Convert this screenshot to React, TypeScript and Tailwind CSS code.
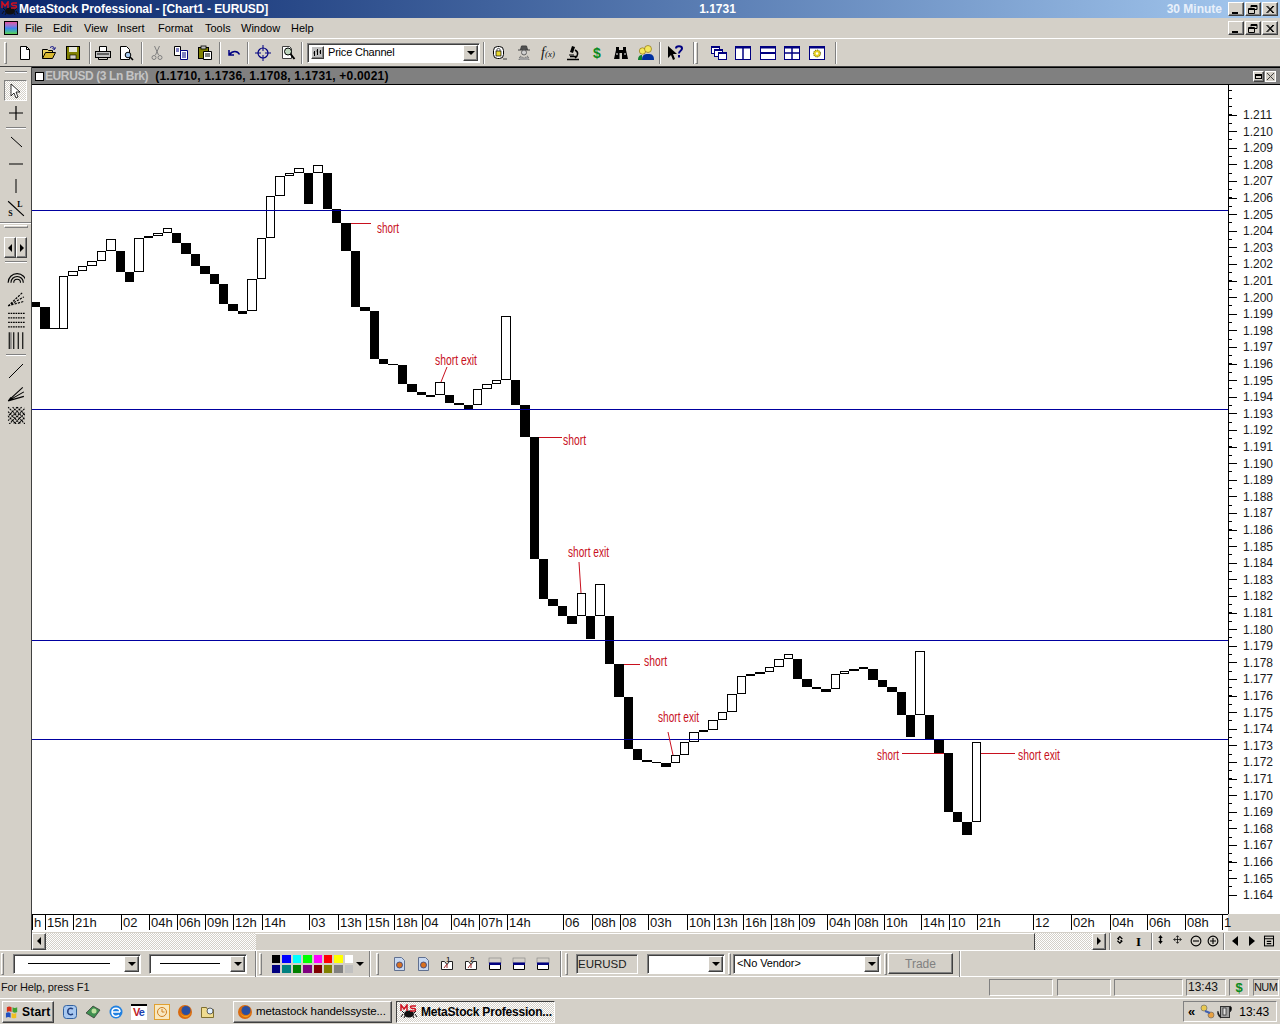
import React from "react";

const ui = "font-['Liberation_Sans',Arial,sans-serif]";
const raised = "border border-t-white border-l-white border-r-[#404040] border-b-[#404040] shadow-[inset_-1px_-1px_0_#808080]";
const sunken = "border border-t-[#808080] border-l-[#808080] border-r-white border-b-white shadow-[inset_1px_1px_0_#404040]";
const thin = "border border-t-[#808080] border-l-[#808080] border-r-white border-b-white";
const dither = "bg-[repeating-conic-gradient(#ffffff_0_25%,#d4d0c8_0_50%)] bg-[length:2px_2px]";

type Bar = [number, number, number, number, "b" | "w"];

const bars: Bar[] = [
  [32, 40, 302, 307, "b"], [40, 50, 307, 329, "b"], [50, 59, 328, 329, "b"], [59, 68, 276, 329, "w"],
  [68, 78, 271, 276, "w"], [78, 87, 266, 271, "w"], [87, 97, 261, 266, "w"], [97, 106, 251, 261, "w"],
  [106, 116, 239, 251, "w"], [116, 125, 251, 272, "b"], [125, 134, 272, 282, "b"], [134, 144, 238, 272, "w"],
  [144, 153, 236, 238, "b"], [153, 163, 233, 236, "w"], [163, 172, 228, 233, "w"], [172, 181, 233, 243, "b"],
  [181, 191, 243, 254, "b"], [191, 200, 254, 266, "b"], [200, 210, 266, 274, "b"], [210, 219, 274, 284, "b"],
  [219, 228, 284, 304, "b"], [228, 238, 304, 311, "b"], [238, 247, 311, 314, "b"], [247, 257, 279, 311, "w"],
  [257, 266, 238, 279, "w"], [266, 275, 196, 238, "w"], [275, 285, 176, 196, "w"], [285, 294, 173, 176, "w"],
  [294, 304, 168, 173, "w"], [304, 313, 173, 204, "b"], [313, 323, 165, 173, "w"], [323, 332, 173, 209, "b"],
  [332, 341, 209, 223, "b"], [341, 351, 223, 251, "b"], [351, 360, 251, 307, "b"], [360, 370, 307, 311, "b"],
  [370, 379, 311, 359, "b"], [379, 388, 359, 364, "b"], [388, 398, 364, 365, "b"], [398, 407, 365, 384, "b"],
  [407, 417, 384, 392, "b"], [417, 426, 392, 395, "b"], [426, 435, 395, 397, "b"], [435, 445, 382, 395, "w"],
  [445, 454, 395, 403, "b"], [454, 464, 403, 405, "b"], [464, 473, 405, 409, "b"], [473, 482, 389, 405, "w"],
  [482, 492, 384, 389, "w"], [492, 501, 380, 384, "w"], [501, 511, 316, 380, "w"], [511, 520, 380, 405, "b"],
  [520, 530, 405, 437, "b"], [530, 539, 437, 559, "b"], [539, 548, 559, 599, "b"], [548, 558, 599, 606, "b"],
  [558, 567, 606, 616, "b"], [567, 577, 616, 624, "b"], [577, 586, 593, 616, "w"], [586, 595, 616, 639, "b"],
  [595, 605, 584, 616, "w"], [605, 614, 616, 664, "b"], [614, 624, 664, 697, "b"], [624, 633, 697, 749, "b"],
  [633, 642, 749, 760, "b"], [642, 652, 760, 762, "b"], [652, 661, 762, 763, "b"], [661, 671, 763, 767, "b"],
  [671, 680, 755, 763, "w"], [680, 689, 742, 755, "w"], [689, 699, 732, 742, "w"], [699, 708, 730, 732, "b"],
  [708, 718, 720, 730, "w"], [718, 727, 712, 720, "w"], [727, 737, 694, 712, "w"], [737, 746, 676, 694, "w"],
  [746, 755, 674, 676, "b"], [755, 765, 672, 674, "b"], [765, 774, 667, 672, "w"], [774, 784, 659, 667, "w"],
  [784, 793, 654, 659, "w"], [793, 802, 659, 679, "b"], [802, 812, 679, 687, "b"], [812, 821, 687, 689, "b"],
  [821, 831, 689, 692, "b"], [831, 840, 674, 689, "w"], [840, 849, 671, 674, "w"], [849, 859, 669, 671, "b"],
  [859, 868, 667, 669, "b"], [868, 878, 669, 680, "b"], [878, 887, 680, 687, "b"], [887, 897, 687, 692, "b"],
  [897, 906, 692, 715, "b"], [906, 915, 715, 737, "b"], [915, 925, 651, 715, "w"], [925, 934, 715, 739, "b"],
  [934, 944, 739, 753, "b"], [944, 953, 753, 812, "b"], [953, 962, 812, 822, "b"], [962, 972, 822, 835, "b"],
  [972, 981, 742, 822, "w"],
];

const channels = [210, 409, 640, 739];

const notes = [
  { t: "short", x: 377, y: 233, w: 22 },
  { t: "short exit", x: 435, y: 365, w: 42 },
  { t: "short", x: 563, y: 445, w: 23 },
  { t: "short exit", x: 568, y: 557, w: 41 },
  { t: "short", x: 644, y: 666, w: 23 },
  { t: "short exit", x: 658, y: 722, w: 41 },
  { t: "short", x: 877, y: 760, w: 22 },
  { t: "short exit", x: 1018, y: 760, w: 42 },
];

const noteLines = [
  [351, 223.5, 371, 223.5], [447, 367, 441, 382], [539, 437.5, 562, 437.5], [579, 562, 581, 593],
  [624, 664.5, 640, 664.5], [668, 732, 673, 755], [902, 753.5, 944, 753.5], [981, 753.5, 1015, 753.5],
];

const prices = Array.from({ length: 48 }, (_, i) => ({ label: (1.211 - i * 0.001).toFixed(3), y: 114.5 + i * 16.6 }));
const minorTicks = Array.from({ length: 98 }, (_, i) => 89.5 + i * 8.3);

const times = [
  { t: "h", w: "w-[13px]" }, { t: "15h", w: "w-[28px]" }, { t: "21h", w: "w-[48px]" }, { t: "02", w: "w-[28px]" },
  { t: "04h", w: "w-[28px]" }, { t: "06h", w: "w-[28px]" }, { t: "09h", w: "w-[28px]" }, { t: "12h", w: "w-[29px]" },
  { t: "14h", w: "w-[47px]" }, { t: "03", w: "w-[29px]" }, { t: "13h", w: "w-[28px]" }, { t: "15h", w: "w-[28px]" },
  { t: "18h", w: "w-[28px]" }, { t: "04", w: "w-[29px]" }, { t: "04h", w: "w-[28px]" }, { t: "07h", w: "w-[28px]" },
  { t: "14h", w: "w-[56px]" }, { t: "06", w: "w-[29px]" }, { t: "08h", w: "w-[28px]" }, { t: "08", w: "w-[28px]" },
  { t: "03h", w: "w-[39px]" }, { t: "10h", w: "w-[27px]" }, { t: "13h", w: "w-[29px]" }, { t: "16h", w: "w-[28px]" },
  { t: "18h", w: "w-[28px]" }, { t: "09", w: "w-[28px]" }, { t: "04h", w: "w-[28px]" }, { t: "08h", w: "w-[29px]" },
  { t: "10h", w: "w-[37px]" }, { t: "14h", w: "w-[28px]" }, { t: "10", w: "w-[28px]" }, { t: "21h", w: "w-[56px]" },
  { t: "12", w: "w-[38px]" }, { t: "02h", w: "w-[39px]" }, { t: "04h", w: "w-[37px]" }, { t: "06h", w: "w-[38px]" },
  { t: "08h", w: "w-[37px]" }, { t: "1", w: "w-[6px]" },
];

const palette = [
  "bg-[#000000]", "bg-[#0000ff]", "bg-[#00ffff]", "bg-[#00ff00]", "bg-[#ff00ff]", "bg-[#ff0000]", "bg-[#ffff00]", "bg-[#ffffff]",
  "bg-[#000080]", "bg-[#008080]", "bg-[#008000]", "bg-[#800080]", "bg-[#800000]", "bg-[#808000]", "bg-[#808080]", "bg-[#c0c0c0]",
];

function I({ children, s = 16 }: { children: React.ReactNode; s?: number }) {
  return (
    <svg width={s} height={s} viewBox="0 0 16 16" className="shrink-0" fill="none">
      {children}
    </svg>
  );
}

function Sep({ className = "" }: { className?: string }) {
  return <div className={"w-[2px] h-[22px] border-l border-l-[#808080] border-r border-r-white " + className} />;
}

function Grip({ className = "" }: { className?: string }) {
  return <div className={"w-[3px] h-[22px] border border-t-white border-l-white border-r-[#808080] border-b-[#808080] " + className} />;
}

function Slot({ children, w = "w-[24px]" }: { children: React.ReactNode; w?: string }) {
  return <div className={"flex items-center justify-center shrink-0 " + w}>{children}</div>;
}

function Caret() {
  return <div className="w-0 h-0 border-l-[4px] border-r-[4px] border-t-[4px] border-l-transparent border-r-transparent border-t-black" />;
}

function Combo({ w, children }: { w: string; children?: React.ReactNode }) {
  return (
    <div className={"h-[20px] bg-white flex items-center justify-between shrink-0 pr-[1px] " + sunken + " " + w}>
      <div className="flex-1 flex items-center min-w-0 h-full">{children}</div>
      <div className={"w-[15px] h-[16px] bg-[#d4d0c8] flex items-center justify-center " + raised}>
        <Caret />
      </div>
    </div>
  );
}

function WinBtn({ kind }: { kind: "min" | "max" | "close" }) {
  return (
    <div className={"w-[16px] h-[14px] bg-[#d4d0c8] flex items-center justify-center " + raised}>
      <svg width="10" height="9" viewBox="0 0 10 9" fill="none">
        {kind === "min" && <rect x="1" y="7" width="6" height="2" fill="#000" />}
        {kind === "max" && (
          <path d="M3 2.500V.5h6v4H7M3 1.500h6M.5 3.500h6v5h-6zM.5 4.500h6" stroke="#000" />
        )}
        {kind === "close" && <path d="M1.500 1l6.500 7M2.500 1L9 8M8 1L1.500 8M9 1L2.500 8" stroke="#000" />}
      </svg>
    </div>
  );
}

function WinBtns() {
  return (
    <div className="flex gap-[1px] mr-[2px]">
      <WinBtn kind="min" />
      <WinBtn kind="max" />
      <WinBtn kind="close" />
    </div>
  );
}

function MsLogo() {
  return (
    <div className="relative w-[18px] h-[16px] shrink-0">
      <svg width="18" height="16" viewBox="0 0 18 16" fill="none">
        <path d="M3 10l-2 3M6 10L4 14M12 10l2 4M15 10l2 3M2 7l2 2M16 7l-2 2" stroke="#111" />
        <ellipse cx="9" cy="10" rx="5" ry="3.500" fill="#111" />
        <path d="M1 7V1l3 4 3-4v6M16 2h-4c-2 0-2 2 0 2.500h2c2 0 2 2.500 0 2.500h-4" stroke="#d01020" strokeWidth="1.500" />
      </svg>
    </div>
  );
}

/* toolbar glyphs */
const IconNew = () => <I><path d="M3.500 1.500h6l3 3v10h-9z" fill="#fff" stroke="#000" /><path d="M9.500 1.500v3h3" stroke="#000" /></I>;
const IconOpen = () => (
  <I>
    <path d="M1.500 13.500v-9h5l1 1h4v2" fill="#e8d060" stroke="#000" />
    <path d="M1.500 13.500l3-6h10l-3 6z" fill="#d8b830" stroke="#000" />
    <path d="M9 2.500c2-1.500 4-1 4.500 1M14.500 2.500l-1 2-2-1" stroke="#000080" />
  </I>
);
const IconSave = () => (
  <I>
    <rect x="1.500" y="1.500" width="13" height="13" fill="#808000" stroke="#000" />
    <rect x="4" y="2" width="8" height="5" fill="#e8e8e0" />
    <rect x="5" y="10" width="6" height="4" fill="#d4d0c8" stroke="#000" strokeWidth=".6" />
  </I>
);
const IconPrint = () => (
  <I>
    <path d="M4.500 6.500v-5h7v5" fill="#fff" stroke="#000" />
    <rect x=".5" y="6.500" width="15" height="6" fill="#c0c0c0" stroke="#000" />
    <path d="M3.500 12.500v2h9v-2M2 9h12" stroke="#000" />
  </I>
);
const IconPreview = () => (
  <I>
    <path d="M2.500 1.500h6l3 3v10h-9z" fill="#fff" stroke="#000" />
    <circle cx="10" cy="10" r="2.800" fill="#a6caf0" stroke="#000" />
    <path d="M12 12l3 3" stroke="#000" strokeWidth="1.600" />
  </I>
);
const IconCut = () => (
  <I>
    <path d="M5.500 1l4 9M10.500 1l-4 9" stroke="#808080" />
    <circle cx="5" cy="12.500" r="2" stroke="#808080" />
    <circle cx="11" cy="12.500" r="2" stroke="#808080" />
  </I>
);
const IconCopy = () => (
  <I>
    <path d="M1.500 1.500h6v9h-6z" fill="#fff" stroke="#000" />
    <path d="M7.500 5.500h7v9h-7z" fill="#fff" stroke="#000080" />
    <path d="M3 4h3M3 6h3M9 8h4M9 10h4M9 12h4" stroke="#000080" />
  </I>
);
const IconPaste = () => (
  <I>
    <rect x="1.500" y="2.500" width="10" height="11" fill="#808000" stroke="#000" />
    <rect x="4" y="1" width="5" height="3" fill="#c0c0c0" stroke="#000" strokeWidth=".8" />
    <path d="M6.500 6.500h8v8h-8z" fill="#fff" stroke="#000" />
    <path d="M8 9h5M8 11h5" stroke="#000" />
  </I>
);
const IconUndo = () => <I><path d="M3 5l0 5 5 0M3.500 9.500c3-4 8-4 10 0" stroke="#000080" strokeWidth="1.500" /></I>;
const IconTarget = () => (
  <I>
    <circle cx="8" cy="8" r="5" stroke="#000080" strokeWidth="1.200" />
    <path d="M8 0v6M8 10v6M0 8h6M10 8h6" stroke="#000080" />
  </I>
);
const IconZoomPage = () => (
  <I>
    <path d="M2.500 1.500h7l2 2v10h-9z" fill="#fff" stroke="#404040" />
    <circle cx="8" cy="6.500" r="3.500" fill="#c0d8c0" stroke="#000" />
    <path d="M10.500 9l4 5" stroke="#000" strokeWidth="2" />
  </I>
);
const IconPC = () => (
  <div className={"w-[13px] h-[13px] bg-[#c0c0c0] ml-[3px] flex items-center justify-center " + raised}>
    <svg width="9" height="9" viewBox="0 0 9 9"><path d="M1.500 3v5M4.500 1v6M7.500 2v4M.5 5h1M3.500 3h1M6.500 4h1" stroke="#000" /></svg>
  </div>
);
const IconLock = () => (
  <I>
    <rect x="2.500" y="1.500" width="10" height="12" rx="4" fill="#fff" stroke="#000" />
    <rect x="5" y="6" width="5" height="5" fill="#e8d830" stroke="#000" strokeWidth=".7" />
    <path d="M6 6V4.500c0-1.500 3-1.500 3 0V6M12 14h4" stroke="#404040" />
  </I>
);
const IconSpy = () => (
  <I>
    <path d="M2 5h12M4.500 5l1-4h5l1 4" fill="#505050" stroke="#404040" />
    <circle cx="8" cy="7.500" r="2.500" fill="#d0d0d0" stroke="#606060" />
    <path d="M3 15l1-4 4 2 4-2 1 4" fill="#a0a0a0" stroke="#707070" strokeDasharray="1 1" />
  </I>
);
const IconScope = () => (
  <I>
    <path d="M7 1l3 1-2 6-3-1z" fill="#000" />
    <path d="M10 5c4 2 3 6 0 8M2 14.500h12M5 11.500h6" stroke="#000" strokeWidth="1.500" />
    <path d="M4 10h5" stroke="#000" />
  </I>
);
const IconBino = () => (
  <I>
    <path d="M3 2h3v3h4V2h3v3l2 9h-6V8H6.500v6H1l2-9z" fill="#000" />
    <path d="M3 9h2M11 9h2" stroke="#fff" />
  </I>
);
const IconUsers = () => (
  <svg width="18" height="16" viewBox="0 0 18 16" className="shrink-0">
    <circle cx="5.500" cy="6" r="3.200" fill="#f4e860" stroke="#806000" strokeWidth=".6" />
    <circle cx="11" cy="4" r="3.500" fill="#f4e860" stroke="#806000" strokeWidth=".6" />
    <path d="M1 15c0-4 2-5 4-5v5z" fill="#108030" />
    <path d="M5 15c0-5 2-6 6-6s6 1 6 6z" fill="#0030a0" />
  </svg>
);
const IconArrow = ({ c = "#000" }: { c?: string }) => <path d="M3 1v12l3-3 2 5 2-1-2-5h4z" fill={c} stroke="#000" strokeWidth=".8" />;
const IconHelp = () => (
  <svg width="18" height="16" viewBox="0 0 18 16" className="shrink-0">
    <path d="M2 1v12l3-3 2 5 2-1-2-5h4z" fill="#000" />
    <path d="M10 3.500c0-3 6-3 6 0 0 2.500-3 2-3 5M13 10v2.500" stroke="#000080" strokeWidth="2" fill="none" />
  </svg>
);
const WinShape = ({ children }: { children?: React.ReactNode }) => (
  <I>
    <rect x=".5" y="1.500" width="15" height="13" fill="#fff" stroke="#000080" />
    <rect x="0" y="1" width="16" height="2.500" fill="#000080" />
    {children}
  </I>
);
const IconCascade = () => (
  <I>
    <rect x=".5" y="1.500" width="8" height="7" fill="#fff" stroke="#000080" /><rect x="0" y="1" width="9" height="2" fill="#000080" />
    <rect x="3.500" y="4.500" width="8" height="7" fill="#fff" stroke="#000080" /><rect x="3" y="4" width="9" height="2" fill="#000080" />
    <rect x="7.500" y="7.500" width="8" height="7" fill="#fff" stroke="#000080" /><rect x="7" y="7" width="9" height="2" fill="#000080" />
  </I>
);
const DocIcon = () => (
  <I>
    <path d="M3.500 1.500h7l3 3v10h-10z" fill="#c8d8f0" stroke="#607090" />
    <circle cx="8.500" cy="9" r="3" fill="#d87020" stroke="#304080" strokeWidth=".8" />
  </I>
);
const LabelIcon = ({ n }: { n: string }) => (
  <I>
    <path d="M2.500 5.500h3l2.500 3 2.500-3h3v8h-11z" fill="#fff" stroke="#202020" />
    <path d="M5 12l3-4v4" stroke="#a03030" />
    <text x="7" y="6" fontSize="8" fill="#000" fontFamily="Liberation Sans">{n}</text>
  </I>
);
const PanelIcon = () => (
  <I>
    <path d="M2.500 2.500h11v11h-11z" fill="#fff" stroke="#000" />
    <rect x="2" y="2" width="12" height="5" fill="#d4d0c8" stroke="#808080" strokeWidth=".6" />
    <rect x="2" y="6.500" width="12" height="2.500" fill="#000080" />
  </I>
);

const Fan = ({ filled }: { filled?: boolean }) => (
  <I s={18}>
    <path d="M1 15L14 3M1 15L15 7M1 15L15 11" stroke="#000" strokeDasharray={filled ? undefined : "2 1"} />
    {filled && <path d="M1 15l4-1.500-2-2z" fill="#000" />}
  </I>
);

function ToolStrip() {
  return (
    <div className="w-[32px] shrink-0 flex flex-col items-center border-r border-r-[#404040] bg-[#d4d0c8] pt-[1px]">
      <div className="w-[22px] h-[1px] mt-[3px] bg-[#808080] border-b border-b-white box-content" />
      <div className={"w-[23px] h-[21px] mt-[7px] flex items-center justify-center border border-t-[#808080] border-l-[#808080] border-r-white border-b-white " + dither}>
        <I><IconArrow c="#fff" /></I>
      </div>
      <div className="h-[24px] flex items-center"><I><path d="M8 1v14M1 8h14" stroke="#000" strokeWidth="1.200" /></I></div>
      <div className="w-[20px] h-[2px] my-[2px] border-t border-t-[#808080] border-b border-b-white" />
      <div className="h-[22px] flex items-center"><I><path d="M3 3l11 10" stroke="#000" /></I></div>
      <div className="h-[22px] flex items-center"><I><path d="M1 8h14" stroke="#000" /></I></div>
      <div className="h-[22px] flex items-center"><I><path d="M8 1v14" stroke="#000" /></I></div>
      <div className="h-[21px] flex items-center">
        <I s={18}>
          <path d="M1 2l14 13" stroke="#000" />
          <text x="9" y="7" fontSize="7" fontWeight="700" fill="#000" fontFamily="Liberation Serif">L</text>
          <text x="1" y="15" fontSize="7" fontWeight="700" fill="#000" fontFamily="Liberation Serif">S</text>
        </I>
      </div>
      <div className="w-[31px] h-[2px] mt-[4px] border-t border-t-[#808080] border-b border-b-white" />
      <div className={"w-[24px] h-[3px] mt-[1px] bg-[#d4d0c8] border border-t-white border-l-white border-r-[#808080] border-b-[#808080]"} />
      <div className="flex mt-[9px]">
        <div className={"w-[12px] h-[21px] flex items-center justify-center bg-[#d4d0c8] " + raised}>
          <div className="w-0 h-0 border-y-[4px] border-r-[4px] border-y-transparent border-r-black" />
        </div>
        <div className={"w-[11px] h-[21px] flex items-center justify-center bg-[#d4d0c8] " + raised}>
          <div className="w-0 h-0 border-y-[4px] border-l-[4px] border-y-transparent border-l-black" />
        </div>
      </div>
      <div className="w-[22px] h-[2px] mt-[3px] border-t border-t-[#808080] border-b border-b-white" />
      <div className="h-[21px] mt-[3px] flex items-center">
        <I s={18}><path d="M1 13a8 8 0 0 1 16 0M3.500 13a5.500 5.500 0 0 1 11 0M6 13a3 3 0 0 1 6 0" stroke="#000" /></I>
      </div>
      <div className="h-[21px] flex items-center"><Fan /></div>
      <div className="h-[21px] flex items-center">
        <I s={18}><path d="M1 3h16M1 7h16M1 11h16M1 15h16" stroke="#000" strokeDasharray="1.500 .7" /></I>
      </div>
      <div className="h-[22px] flex items-center">
        <I s={18}><path d="M2 1v16M6 1v16M10 1v16M14 1v16" stroke="#000" /><path d="M3.500 1v16" stroke="#666" /></I>
      </div>
      <div className="w-[20px] h-[2px] mt-[3px] border-t border-t-[#808080] border-b border-b-white" />
      <div className="h-[20px] mt-[5px] flex items-center"><I><path d="M1 15L15 1" stroke="#000" /></I></div>
      <div className="h-[21px] mt-[1px] flex items-center"><Fan filled /></div>
      <div className="h-[20px] mt-[2px] flex items-center">
        <I s={18}>
          <path d="M1 1l16 16M5 1l12 12M9 1l8 8M1 5l12 12M1 9l8 8M17 1L1 17M13 1L1 13M9 1L1 9M17 5L5 17M17 9L9 17" stroke="#000" strokeDasharray="1.500 .7" />
        </I>
      </div>
    </div>
  );
}

function ChartPlot() {
  return (
    <svg width="1248" height="829" viewBox="32 85 1248 829" className="block bg-white" shapeRendering="crispEdges">
      {bars.map(([x0, x1, y0, y1, k], i) =>
        k === "b" ? (
          <rect key={i} x={x0} y={y0} width={x1 - x0} height={y1 - y0} fill="#000" />
        ) : (
          <rect key={i} x={x0 + 0.5} y={y0 + 0.5} width={x1 - x0 - 1} height={y1 - y0 - 1} fill="#fff" stroke="#000" />
        )
      )}
      {channels.map((y) => (
        <line key={y} x1="32" x2="1228" y1={y + 0.5} y2={y + 0.5} stroke="#0000a0" />
      ))}
      <g shapeRendering="auto">
        {noteLines.map((l, i) => (
          <line key={i} x1={l[0]} y1={l[1]} x2={l[2]} y2={l[3]} stroke="#c8101e" />
        ))}
        {notes.map((n, i) => (
          <text key={i} x={n.x} y={n.y} fontSize="14" fill="#c8101e" fontFamily="Liberation Sans" textLength={n.w} lengthAdjust="spacingAndGlyphs">
            {n.t}
          </text>
        ))}
      </g>
      <line x1="1228.5" x2="1228.5" y1="85" y2="914" stroke="#000" />
      {minorTicks.map((y) => (
        <line key={y} x1="1229" x2="1232" y1={Math.round(y) + 0.5} y2={Math.round(y) + 0.5} stroke="#000" />
      ))}
      {prices.map((p) => (
        <g key={p.label}>
          <line x1="1229" x2="1237" y1={Math.round(p.y) + 0.5} y2={Math.round(p.y) + 0.5} stroke="#000" />
          <text x="1243" y={p.y + 4.5} fontSize="12" fill="#1a1a1a" fontFamily="Liberation Sans" shapeRendering="auto">
            {p.label}
          </text>
        </g>
      ))}
    </svg>
  );
}

function ChartWindow() {
  return (
    <div className="flex-1 flex flex-col min-w-0">
      <div className="h-[17px] mt-0 bg-[#808080] border-t border-t-black flex items-center pl-[3px] pr-[3px] text-[12px] font-bold leading-none">
        <div className="w-[9px] h-[9px] bg-white border border-black mr-[1px]" />
        <span className="text-[#c4c4c4] tracking-[-0.4px]">EURUSD (3 Ln Brk)</span>
        <span className="ml-[7px] text-black tracking-[0.2px]">(1.1710, 1.1736, 1.1708, 1.1731, +0.0021)</span>
        <div className="ml-auto flex items-center gap-[1px] mr-[1px]">
          <div className={"w-[11px] h-[11px] bg-[#d4d0c8] flex items-center justify-center " + raised}>
            <div className="w-[7px] h-[5px] border border-black border-t-2" />
          </div>
          <div className="w-[11px] h-[11px] bg-[#d4d0c8] border border-white flex items-center justify-center">
            <svg width="7" height="7" viewBox="0 0 7 7"><path d="M0 0l7 7M7 0L0 7" stroke="#404040" /></svg>
          </div>
        </div>
      </div>
      <div className="h-[1px] bg-black" />
      <ChartPlot />
      <div className="w-[1196px] h-[17px] flex bg-white border-t border-t-black text-[13px] leading-[15px] text-[#111]">
        {times.map((c, i) => (
          <div key={i} className={"shrink-0 h-[15px] border-l border-l-black pl-[1px] " + c.w}>
            {c.t}
          </div>
        ))}
      </div>
      <ScrollRow />
    </div>
  );
}

function ScrollRow() {
  return (
    <div className="h-[19px] flex items-center border-t border-t-white">
      <div className={"w-[14px] h-[17px] shrink-0 flex items-center justify-center bg-[#d4d0c8] " + raised}>
        <div className="w-0 h-0 border-y-[4px] border-r-[4px] border-y-transparent border-r-black" />
      </div>
      <div className={"w-[210px] h-[17px] shrink-0 " + dither} />
      <div className="w-[779px] h-[17px] shrink-0 border-t border-t-white border-r border-r-[#404040] bg-[#d4d0c8]" />
      <div className={"w-[57px] h-[17px] shrink-0 " + dither} />
      <div className={"w-[14px] h-[17px] shrink-0 flex items-center justify-center bg-[#d4d0c8] " + raised}>
        <div className="w-0 h-0 border-y-[4px] border-l-[4px] border-y-transparent border-l-black" />
      </div>
      <div className="w-[2px] h-[17px] ml-[3px] border-l border-l-[#808080] border-r border-r-white" />
      <Slot w="w-[17px] ml-[2px]"><I s={13}><path d="M3 5l3-3 3 3M9 7l-3 3-3-3M4.500 3v3M7.500 6v3" stroke="#000" strokeWidth="1.600" /></I></Slot>
      <Slot w="w-[17px]"><span className="text-[13px] font-bold font-['Liberation_Serif'] leading-none">I</span></Slot>
      <div className="w-[2px] h-[17px] ml-[4px] border-l border-l-[#808080] border-r border-r-white" />
      <Slot w="w-[17px]"><I s={12}><path d="M6 0l3 4H3zM6 12l3-4H3z" fill="#000" /><path d="M6 3v6" stroke="#000" strokeWidth="2" /></I></Slot>
      <Slot w="w-[17px]"><I s={12}><path d="M6 1v10M1 6h10M4 3l2-2 2 2M4 9l2 2 2-2M3 4L1 6l2 2M9 4l2 2-2 2" stroke="#000" /></I></Slot>
      <Slot w="w-[17px]"><I s={12}><circle cx="8" cy="8" r="6.500" stroke="#000" strokeWidth="1.500" /><path d="M4 8h8" stroke="#000" strokeWidth="1.500" /></I></Slot>
      <Slot w="w-[17px]"><I s={12}><circle cx="8" cy="8" r="6.500" stroke="#000" strokeWidth="1.500" /><path d="M4 8h8M8 4v8" stroke="#000" strokeWidth="1.500" /></I></Slot>
      <div className="w-[2px] h-[17px] ml-[2px] border-l border-l-[#808080] border-r border-r-white" />
      <Slot w="w-[17px] ml-[1px]"><div className="w-0 h-0 border-y-[5px] border-r-[6px] border-y-transparent border-r-black" /></Slot>
      <Slot w="w-[17px]"><div className="w-0 h-0 border-y-[5px] border-l-[6px] border-y-transparent border-l-black" /></Slot>
      <Slot w="w-[17px]"><I s={12}><rect x="2" y="1.500" width="12" height="13" stroke="#000" strokeWidth="1.400" /><path d="M2 5h12M5 8.500h6M5 11.500h6" stroke="#000" strokeWidth="1.400" /></I></Slot>
    </div>
  );
}

function BottomBar() {
  return (
    <div className="h-[27px] flex items-center border-t border-t-white border-b border-b-white bg-[#d4d0c8] text-[12px]">
      <Grip className="ml-[1px]" />
      <Combo w="w-[128px] ml-[9px]">
        <div className="h-[1px] w-[82px] bg-black ml-[14px]" />
      </Combo>
      <Combo w="w-[98px] ml-[8px]">
        <div className="h-[1px] w-[60px] bg-black ml-[10px]" />
      </Combo>
      <Sep className="ml-[8px] h-[26px]" />
      <Grip className="ml-[2px]" />
      <div className="grid grid-cols-8 gap-x-[2px] gap-y-[2px] w-[81px] ml-[10px]">
        {palette.map((c) => (
          <div key={c} className={"h-[8px] " + c} />
        ))}
      </div>
      <div className="ml-[3px]"><Caret /></div>
      <Sep className="ml-[5px] h-[26px]" />
      <Grip className="ml-[5px]" />
      <Slot w="w-[24px] ml-[8px]"><DocIcon /></Slot>
      <Slot><DocIcon /></Slot>
      <Slot><LabelIcon n="1" /></Slot>
      <Slot><LabelIcon n="2" /></Slot>
      <Slot><PanelIcon /></Slot>
      <Slot><PanelIcon /></Slot>
      <Slot><PanelIcon /></Slot>
      <Sep className="ml-[5px] h-[26px]" />
      <Grip className="ml-[3px]" />
      <div className={"w-[62px] h-[20px] ml-[8px] pl-[1px] text-[11.5px] leading-[18px] text-[#202020] " + sunken}>EURUSD</div>
      <Combo w="w-[78px] ml-[9px]" />
      <Grip className="ml-[3px]" />
      <Combo w="w-[148px] ml-[2px]">
        <span className="pl-[3px] text-[11px] tracking-[-0.1px] leading-none">&lt;No Vendor&gt;</span>
      </Combo>
      <Grip className="ml-[3px]" />
      <div className={"w-[65px] h-[21px] ml-[1px] flex items-center justify-center text-[#808080] text-[12px] bg-[#d4d0c8] " + raised}>Trade</div>
      <Sep className="ml-[6px] h-[26px]" />
    </div>
  );
}

function StatusBar() {
  return (
    <div className="h-[21px] flex items-center bg-[#d4d0c8] text-[12px] text-[#111]">
      <span className="pl-[1px] mr-auto text-[11px] tracking-[-0.15px]">For Help, press F1</span>
      <div className={"w-[64px] h-[17px] " + thin} />
      <div className={"w-[54px] h-[17px] ml-[4px] " + thin} />
      <div className={"w-[69px] h-[17px] ml-[3px] " + thin} />
      <div className={"w-[40px] h-[17px] ml-[3px] pl-[1px] leading-[15px] " + thin}>13:43</div>
      <div className={"w-[20px] h-[17px] ml-[3px] text-center font-bold text-[#0a8a20] text-[13px] leading-[15px] " + thin}>$</div>
      <div className={"w-[26px] h-[17px] ml-[4px] mr-[1px] text-[11px] leading-[15px] tracking-[-0.6px] whitespace-nowrap " + thin}>NUM</div>
    </div>
  );
}

const Firefox = ({ s = 16 }: { s?: number }) => (
  <I s={s}>
    <circle cx="8" cy="8" r="7" fill="#d86a10" />
    <circle cx="9" cy="6.500" r="4.500" fill="#2a4fa0" />
    <path d="M2 6c1 6 8 8 12 3-2 6-10 6-12-3z" fill="#f0a020" />
  </I>
);

function TaskBar() {
  return (
    <div className="h-[26px] flex items-center bg-[#d4d0c8] border-t border-t-white text-[12px] text-black">
      <div className={"w-[52px] h-[22px] ml-[2px] flex items-center gap-[2px] pl-[2px] font-bold text-[12px] tracking-[0.2px] bg-[#d4d0c8] " + raised}>
        <svg width="15" height="14" viewBox="0 0 16 14" className="shrink-0">
          <path d="M2 2c2-1 3-1 5 0v5C5 6 4 6 2 7z" fill="#d83018" />
          <path d="M8 2c2 1 3 1 5 0v5c-2 1-3 1-5 0z" fill="#40a030" />
          <path d="M1 8c2-1 3-1 5 0v5c-2-1-3-1-5 0z" fill="#2050c0" />
          <path d="M7 8c2 1 3 1 5 0v5c-2 1-3 1-5 0z" fill="#f0c020" />
        </svg>
        Start
      </div>
      <div className="flex items-center ml-[4px]">
        <Slot w="w-[23px]">
          <I><rect x="1.500" y="1.500" width="13" height="13" rx="3" fill="#a8c8f0" stroke="#3060a0" /><path d="M11 5c-3-2-6 0-5 4 1 2 3 2 5 1" stroke="#204080" strokeWidth="1.500" /></I>
        </Slot>
        <Slot w="w-[23px]">
          <I><path d="M1 9l7-7 7 4-6 8z" fill="#409050" stroke="#303030" strokeWidth=".7" /><circle cx="9" cy="7" r="2.500" fill="#c0e0a0" /></I>
        </Slot>
        <Slot w="w-[23px]">
          <I><circle cx="8" cy="8" r="6.500" fill="#2080e0" /><path d="M4 8h8M12 8c0-5-8-5-8 0s5 5 7 3" stroke="#fff" strokeWidth="1.500" /></I>
        </Slot>
        <Slot w="w-[23px]">
          <div className="w-[16px] h-[16px] bg-white border-t-2 border-t-black text-[11px] font-bold leading-[13px] text-center tracking-[-1px]">
            <span className="text-[#c02020]">V</span><span className="text-[#2040b0]">e</span>
          </div>
        </Slot>
        <Slot w="w-[23px]">
          <I><rect x=".5" y=".5" width="15" height="15" fill="#f8e8c0" stroke="#e0a030" /><circle cx="8" cy="8" r="4.500" stroke="#d08020" /><path d="M8 5v3h2.500" stroke="#d08020" /></I>
        </Slot>
        <Slot w="w-[23px]"><Firefox /></Slot>
        <Slot w="w-[23px]">
          <I><path d="M1.500 13.500v-10h5l1 2h6v8z" fill="#f0dc90" stroke="#807030" /><circle cx="10" cy="7" r="3" fill="#e0f0ff" stroke="#606060" /></I>
        </Slot>
      </div>
      <div className={"w-[159px] h-[22px] ml-[14px] flex items-center gap-[3px] pl-[3px] bg-[#d4d0c8] " + raised}>
        <Firefox />
        <span className="whitespace-nowrap text-[11.5px] tracking-[-0.1px]">metastock handelssyste...</span>
      </div>
      <div className={"w-[159px] h-[22px] ml-[4px] flex items-center gap-[3px] pl-[3px] font-bold border border-t-[#404040] border-l-[#404040] border-r-white border-b-white " + dither}>
        <MsLogo />
        <span className="whitespace-nowrap tracking-[-0.2px]">MetaStock Profession...</span>
      </div>
      <div className={"w-[94px] h-[21px] ml-auto mr-[3px] flex items-center pl-[4px] " + thin}>
        <span className="font-bold text-[13px] leading-none mr-[4px]">«</span>
        <svg width="17" height="16" viewBox="0 0 17 16" className="shrink-0">
          <circle cx="5" cy="4" r="3" fill="#e8c850" stroke="#606060" strokeWidth=".6" />
          <circle cx="12" cy="11" r="3" fill="#e8a040" stroke="#606060" strokeWidth=".6" />
          <path d="M6 7l5 2" stroke="#4060b0" strokeWidth="2" />
        </svg>
        <svg width="16" height="17" viewBox="0 0 16 17" className="shrink-0 ml-[1px]">
          <rect x="3.500" y="3.500" width="9" height="11" fill="#a0a0a0" stroke="#303030" />
          <rect x="6" y="5" width="3" height="7" fill="#e0e0e0" stroke="#202020" strokeWidth=".7" />
          <path d="M13 3c2 1 2 4 0 6M1 8c-1 3 1 6 3 7" stroke="#303030" />
        </svg>
        <span className="ml-[6px]">13:43</span>
      </div>
    </div>
  );
}

export default function App() {
  return (
    <div className={"w-[1280px] h-[1024px] overflow-hidden flex flex-col bg-[#d4d0c8] " + ui}>
      <div className="h-[18px] flex items-center bg-gradient-to-r from-[#0a246a] to-[#a6caf0] text-white font-bold text-[12px] leading-none">
        <div className="ml-[1px] w-[18px]"><MsLogo /></div>
        <span className="whitespace-nowrap tracking-[-0.1px]">MetaStock Professional - [Chart1 - EURUSD]</span>
        <span className="ml-[431px]">1.1731</span>
        <span className="ml-auto mr-[6px] text-[#e8f0fa]">30 Minute</span>
        <WinBtns />
      </div>

      <div className="h-[20px] flex items-center text-[11px] text-black">
        <div className="w-[14px] h-[14px] ml-[4px] mr-[7px] border border-black bg-gradient-to-b from-[#e050a0] via-[#4080f0] to-[#60d040]" />
        <span className="w-[28px]">File</span>
        <span className="w-[31px]">Edit</span>
        <span className="w-[33px]">View</span>
        <span className="w-[41px]">Insert</span>
        <span className="w-[47px]">Format</span>
        <span className="w-[36px]">Tools</span>
        <span className="w-[50px]">Window</span>
        <span>Help</span>
        <div className="ml-auto"><WinBtns /></div>
      </div>

      <div className="h-[29px] flex items-center border-t border-t-white border-b border-b-[#404040]">
        <Grip className="ml-[4px]" />
        <Slot w="w-[24px] ml-[6px]"><IconNew /></Slot>
        <Slot><IconOpen /></Slot>
        <Slot><IconSave /></Slot>
        <Sep className="ml-[4px]" />
        <Slot w="w-[23px]"><IconPrint /></Slot>
        <Slot><IconPreview /></Slot>
        <Sep className="ml-[3px]" />
        <Slot w="w-[24px] ml-[2px]"><IconCut /></Slot>
        <Slot><IconCopy /></Slot>
        <Slot w="w-[23px]"><IconPaste /></Slot>
        <Sep className="ml-[3px]" />
        <Slot w="w-[24px] ml-[1px]"><IconUndo /></Slot>
        <Sep className="ml-[1px]" />
        <Slot w="w-[24px] ml-[2px]"><IconTarget /></Slot>
        <Slot w="w-[25px]"><IconZoomPage /></Slot>
        <Sep className="ml-[1px]" />
        <Combo w="w-[173px] ml-[4px]">
          <IconPC />
          <span className="ml-[4px] text-[11px] tracking-[-0.2px] leading-none text-black">Price Channel</span>
        </Combo>
        <Sep className="ml-[3px]" />
        <Slot w="w-[24px] ml-[2px]"><IconLock /></Slot>
        <Slot w="w-[25px]"><IconSpy /></Slot>
        <Slot>
          <span className="font-['Liberation_Serif'] italic text-[14px] leading-none text-[#111]">f<span className="text-[9px]">(x)</span></span>
        </Slot>
        <Slot w="w-[25px]"><IconScope /></Slot>
        <Slot><span className="font-bold text-[#0a8a20] text-[14px] leading-none">$</span></Slot>
        <Slot><IconBino /></Slot>
        <Slot w="w-[25px]"><IconUsers /></Slot>
        <Sep className="ml-[1px]" />
        <Slot w="w-[24px] ml-[2px]"><IconHelp /></Slot>
        <Sep className="ml-[6px]" />
        <Grip />
        <Slot w="w-[24px] ml-[9px]"><IconCascade /></Slot>
        <Slot w="w-[24.500px]"><WinShape><path d="M8 2v12" stroke="#000080" strokeWidth="1.500" /></WinShape></Slot>
        <Slot w="w-[24.500px]"><WinShape><path d="M0 8h16" stroke="#000080" strokeWidth="2" /></WinShape></Slot>
        <Slot w="w-[24.500px]"><WinShape><path d="M0 8h16M8 2v12" stroke="#000080" strokeWidth="1.500" /></WinShape></Slot>
        <Slot w="w-[24.500px]">
          <WinShape>
            <circle cx="8" cy="8.500" r="3.500" fill="#e8d020" stroke="#505010" strokeDasharray="1 1" />
            <circle cx="8" cy="8.500" r="1.300" fill="#fff" />
          </WinShape>
        </Slot>
        <Sep className="ml-[6px]" />
      </div>

      <div className="flex h-[883px]">
        <ToolStrip />
        <ChartWindow />
      </div>

      <BottomBar />
      <StatusBar />
      <TaskBar />
    </div>
  );
}
